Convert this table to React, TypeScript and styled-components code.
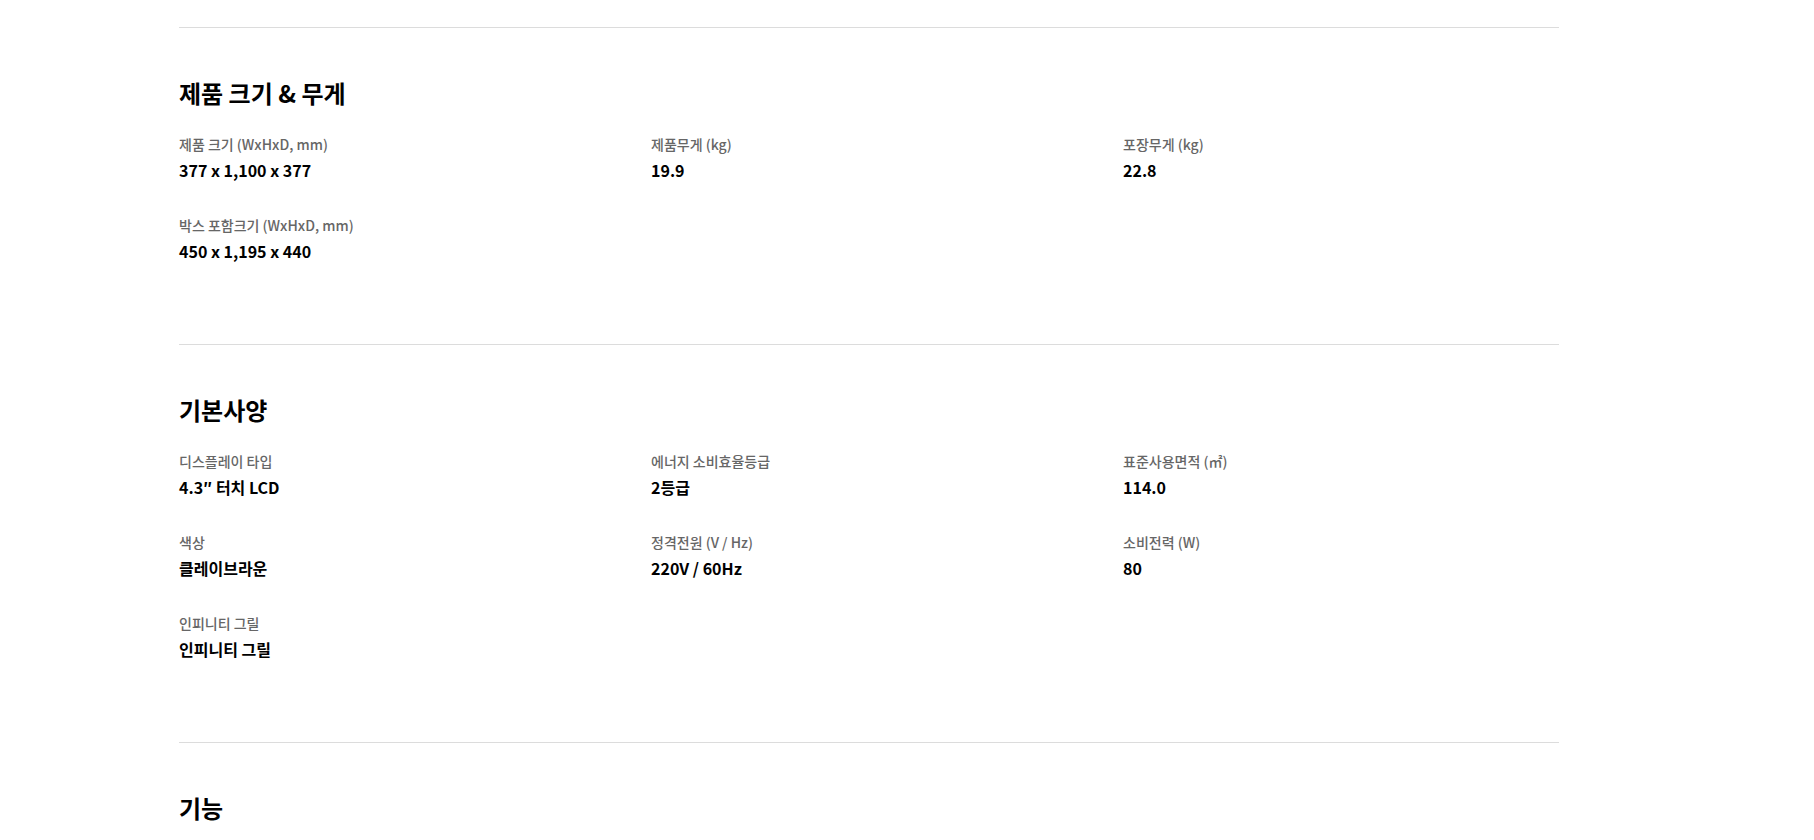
import styled, { createGlobalStyle } from 'styled-components';

const GlobalStyle = createGlobalStyle`
    body {
        margin: 0;
        background: #fff;
        font-family: "Noto Sans CJK KR", "Noto Sans", sans-serif;
        color: #000;
    }
`;

const Page = styled.div`
    padding: 27px 0 0 179px;
`;

const Container = styled.div`
    width: 1380px;
`;

const Section = styled.section`
    border-top: 1px solid #dcdcdc;
    padding: 48px 0 81px;
`;

const Heading = styled.h3`
    margin: 0 0 24px;
    font-size: 24px;
    line-height: 34px;
    font-weight: 700;
    color: #000;
`;

const SpecGrid = styled.dl`
    display: grid;
    grid-template-columns: repeat(3, 437px);
    column-gap: 35px;
    row-gap: 33px;
    margin: 0;
`;

const SpecItem = styled.div`
    display: flex;
    flex-direction: column;
    gap: 4px;
`;

const Label = styled.dt`
    font-size: 14px;
    line-height: 20px;
    font-weight: 500;
    color: #666;
`;

const Value = styled.dd`
    margin: 0;
    font-size: 16px;
    line-height: 24px;
    font-weight: 700;
    color: #000;
`;

type Spec = { label: string; value: string };

const sections: { title: string; specs: Spec[] }[] = [
    {
        title: '제품 크기 & 무게',
        specs: [
            { label: '제품 크기 (WxHxD, mm)', value: '377 x 1,100 x 377' },
            { label: '제품무게 (kg)', value: '19.9' },
            { label: '포장무게 (kg)', value: '22.8' },
            { label: '박스 포함크기 (WxHxD, mm)', value: '450 x 1,195 x 440' },
        ],
    },
    {
        title: '기본사양',
        specs: [
            { label: '디스플레이 타입', value: '4.3″ 터치 LCD' },
            { label: '에너지 소비효율등급', value: '2등급' },
            { label: '표준사용면적 (㎡)', value: '114.0' },
            { label: '색상', value: '클레이브라운' },
            { label: '정격전원 (V / Hz)', value: '220V / 60Hz' },
            { label: '소비전력 (W)', value: '80' },
            { label: '인피니티 그릴', value: '인피니티 그릴' },
        ],
    },
    {
        title: '기능',
        specs: [],
    },
];

export default function App() {
    return (
        <Page>
            <GlobalStyle />
            <Container>
                {sections.map((section) => (
                    <Section key={section.title}>
                        <Heading>{section.title}</Heading>
                        {section.specs.length > 0 && (
                            <SpecGrid>
                                {section.specs.map((spec) => (
                                    <SpecItem key={spec.label}>
                                        <Label>{spec.label}</Label>
                                        <Value>{spec.value}</Value>
                                    </SpecItem>
                                ))}
                            </SpecGrid>
                        )}
                    </Section>
                ))}
            </Container>
        </Page>
    );
}
